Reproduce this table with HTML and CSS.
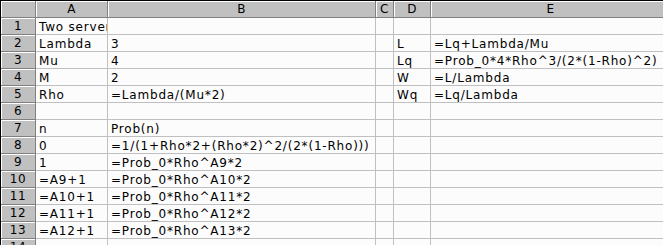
FILE: index.html
```html
<!DOCTYPE html>
<html>
<head>
<meta charset="utf-8">
<link rel="stylesheet" href="styles.css">
</head>
<body>
<div class="sheet">
  <div class="corner"></div>
  <div class="ch">A</div><div class="ch">B</div><div class="ch">C</div><div class="ch">D</div><div class="ch last">E</div>

  <div class="rh">1</div><div class="c clip">Two server</div><div class="c"></div><div class="c"></div><div class="c"></div><div class="c"></div>
  <div class="rh">2</div><div class="c">Lambda</div><div class="c">3</div><div class="c"></div><div class="c">L</div><div class="c">=Lq+Lambda/Mu</div>
  <div class="rh">3</div><div class="c">Mu</div><div class="c">4</div><div class="c"></div><div class="c">Lq</div><div class="c">=Prob_0*4*Rho^3/(2*(1-Rho)^2)</div>
  <div class="rh">4</div><div class="c">M</div><div class="c">2</div><div class="c"></div><div class="c">W</div><div class="c">=L/Lambda</div>
  <div class="rh">5</div><div class="c">Rho</div><div class="c">=Lambda/(Mu*2)</div><div class="c"></div><div class="c">Wq</div><div class="c">=Lq/Lambda</div>
  <div class="rh">6</div><div class="c"></div><div class="c"></div><div class="c"></div><div class="c"></div><div class="c"></div>
  <div class="rh">7</div><div class="c">n</div><div class="c">Prob(n)</div><div class="c"></div><div class="c"></div><div class="c"></div>
  <div class="rh">8</div><div class="c">0</div><div class="c">=1/(1+Rho*2+(Rho*2)^2/(2*(1-Rho)))</div><div class="c"></div><div class="c"></div><div class="c"></div>
  <div class="rh">9</div><div class="c">1</div><div class="c">=Prob_0*Rho^A9*2</div><div class="c"></div><div class="c"></div><div class="c"></div>
  <div class="rh">10</div><div class="c">=A9+1</div><div class="c">=Prob_0*Rho^A10*2</div><div class="c"></div><div class="c"></div><div class="c"></div>
  <div class="rh">11</div><div class="c">=A10+1</div><div class="c">=Prob_0*Rho^A11*2</div><div class="c"></div><div class="c"></div><div class="c"></div>
  <div class="rh">12</div><div class="c">=A11+1</div><div class="c">=Prob_0*Rho^A12*2</div><div class="c"></div><div class="c"></div><div class="c"></div>
  <div class="rh">13</div><div class="c">=A12+1</div><div class="c">=Prob_0*Rho^A13*2</div><div class="c"></div><div class="c"></div><div class="c"></div>
  <div class="rh">14</div><div class="c"></div><div class="c"></div><div class="c"></div><div class="c"></div><div class="c"></div>
</div>
</body>
</html>
```

FILE: styles.css
```css
html, body {
  margin: 0;
  padding: 0;
  background: #fcfcfc;
}
.sheet {
  width: 663px;
  height: 245px;
  overflow: hidden;
  box-sizing: border-box;
  border-top: 1px solid #000;
  border-left: 1px solid #000;
  display: grid;
  grid-template-columns: 35px 72px 268px 18px 37px 240px;
  grid-auto-rows: 17px;
  font-family: "DejaVu Sans", sans-serif;
  font-size: 12px;
  color: #000;
}
.sheet > div {
  box-sizing: border-box;
  overflow: hidden;
  white-space: nowrap;
}
.corner, .ch, .rh {
  background: #c0c0c0;
  border-right: 1px solid #808080;
  border-bottom: 1px solid #808080;
  box-shadow: inset 1px 1px 0 #fff;
  text-align: center;
  line-height: 16px;
  letter-spacing: 0.5px;
}
.c {
  background: #fcfcfc;
  border-right: 1px solid #c0c0c0;
  border-bottom: 1px solid #c0c0c0;
  padding: 1px 0 0 3px;
  line-height: 16px;
  letter-spacing: 0.8px;
}
```
